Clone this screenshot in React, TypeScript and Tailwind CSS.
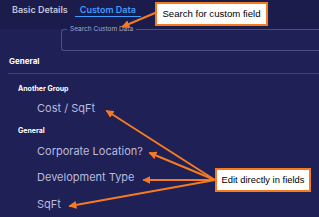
import React from 'react'

const fields = ['Corporate Location?', 'Development Type', 'SqFt']

function Arrows() {
  return (
    <svg className="absolute inset-0 pointer-events-none" width="319" height="217" viewBox="0 0 319 217">
      <defs>
        <marker id="head" markerWidth="4" markerHeight="4" refX="3.2" refY="2" orient="auto" markerUnits="strokeWidth">
          <path d="M0,0 L4,2 L0,4 z" fill="#f47b20" />
        </marker>
      </defs>
      <g stroke="#f47b20" strokeWidth="2" fill="none" strokeLinecap="round">
        <line x1="155" y1="13" x2="123" y2="26.5" markerEnd="url(#head)" />
        <line x1="215" y1="180" x2="107" y2="111" markerEnd="url(#head)" />
        <line x1="215" y1="180" x2="150" y2="153" markerEnd="url(#head)" />
        <line x1="215" y1="180" x2="144" y2="180" markerEnd="url(#head)" />
        <line x1="215" y1="180" x2="70" y2="206" markerEnd="url(#head)" />
      </g>
    </svg>
  )
}

export default function App() {
  return (
    <div
      className="relative w-[319px] h-[217px] overflow-hidden bg-[#1f2055]"
      style={{ fontFamily: 'Inter, "Noto Sans", sans-serif' }}
    >
      {/* tabs */}
      <div className="bg-[#1b1c4b] h-[22px] flex items-start pt-[4px] pl-[12px] gap-[7px]">
        <span className="text-[9px] leading-[11px] font-semibold text-[#c4c6dc]">Basic Details</span>
        <span className="text-[9px] leading-[11px] font-semibold text-[#3f9dff] px-[5px] pb-[1px] border-b-[1.5px] border-[#3f9dff]">
          Custom Data
        </span>
      </div>

      {/* search */}
      <div className="bg-[#1b1c4b] h-[7px]" />
      <fieldset className="ml-[61px] -mt-[4px] h-[26px] border border-r-0 border-[#4a4d88] rounded-l-[3px] px-[5px]">
        <legend className="px-[3px] text-[6.5px] leading-[8px] text-[#a5a8cc]">Search Custom Data</legend>
      </fieldset>

      {/* list */}
      <div className="ml-[8px] pl-[1px] pt-[5px] pb-[7px] border-b border-[#3e4184]">
        <div className="text-[8px] leading-[10px] font-bold text-white">General</div>
      </div>

      <div className="pl-[18px] mt-[10px] text-[7px] leading-[9px] font-bold text-white">Another Group</div>
      <div className="pl-[37px] mt-[8px] text-[11px] leading-[14px] text-[#b8bbdf]">Cost / SqFt</div>
      <div className="pl-[18px] mt-[11px] text-[7px] leading-[9px] font-bold text-white">General</div>
      <div className="pl-[37px] mt-[9px] text-[11px] leading-[14px] text-[#b8bbdf]">{fields[0]}</div>
      <div className="pl-[37px] mt-[12px] text-[11px] leading-[14px] text-[#b8bbdf]">{fields[1]}</div>
      <div className="pl-[37px] mt-[13px] text-[11px] leading-[14px] text-[#b8bbdf]">{fields[2]}</div>

      <Arrows />

      {/* callouts */}
      <div
        className="absolute left-[155px] top-[2px] w-[113px] h-[24px] bg-white border-2 border-[#f47b20] flex items-center justify-center text-[9.6px] text-black"
        style={{ fontFamily: '"Liberation Sans", Arial, sans-serif' }}
      >
        Search for custom field
      </div>
      <div
        className="absolute left-[215px] top-[168px] w-[96px] h-[24px] bg-white border-2 border-[#f47b20] flex items-center justify-center text-[9.4px] text-black"
        style={{ fontFamily: '"Liberation Sans", Arial, sans-serif' }}
      >
        Edit directly in fields
      </div>
    </div>
  )
}
